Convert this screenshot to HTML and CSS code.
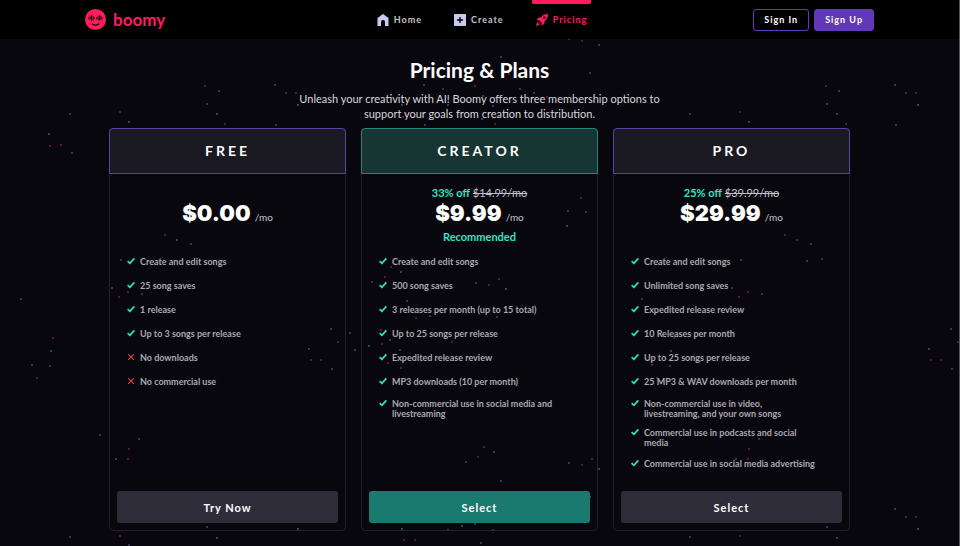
FILE: index.html
```html
<!DOCTYPE html>
<html lang="en">
<head>
<meta charset="utf-8">
<title>Boomy – Pricing &amp; Plans</title>
<link rel="stylesheet" href="styles.css">
</head>
<body>
<svg class="stars" aria-hidden="true">
  <path class="star-red" d="M205 86h0M225 124h0M286 93h0M296 93h0M120 112h0M582 41h0M509 74h0M475 86h0M403 117h0M414 117h0M495 124h0M547 97h0M826 86h0M846 124h0M906 93h0M916 93h0M740 112h0M50 146h0M61 145h0M165 235h0M581 198h0M391 267h0M785 235h0M822 259h0M119 297h0M128 292h0M53 338h0M37 378h0M338 342h0M311 360h0M321 360h0M129 449h0M128 459h0M120 536h0M385 277h0M489 285h0M499 279h0M416 318h0M381 330h0M382 344h0M452 342h0M388 363h0M401 368h0M484 447h0M478 457h0M582 465h0M592 459h0M404 540h0M415 540h0M739 297h0M748 292h0M674 338h0M657 378h0M958 342h0M931 360h0M941 360h0M749 449h0M748 459h0M906 517h0M916 517h0M740 536h0"/>
  <path class="star-teal" d="M217 114h0M298 105h0M129 122h0M534 93h0M402 105h0M482 119h0M483 96h0M827 104h0M837 114h0M918 105h0M749 122h0M49 134h0M177 240h0M567 226h0M112 288h0M51 351h0M309 349h0M116 459h0M298 529h0M217 538h0M401 272h0M506 289h0M390 340h0M369 346h0M494 452h0M599 469h0M590 497h0M402 529h0M462 526h0M671 351h0M929 349h0M736 459h0M918 529h0M837 538h0"/>
  <path class="star-blue" d="M219 91h0M207 104h0M275 85h0M276 125h0M70 114h0M569 39h0M599 45h0M501 57h0M590 73h0M424 85h0M443 89h0M520 89h0M448 105h0M493 106h0M425 125h0M839 91h0M895 85h0M896 125h0M690 114h0M72 153h0M191 244h0M121 260h0M568 211h0M586 212h0M797 240h0M811 244h0M741 260h0M807 261h0M142 294h0M21 299h0M32 365h0M50 366h0M331 329h0M350 333h0M355 350h0M332 369h0M100 435h0M139 439h0M207 527h0M70 537h0M129 545h0M372 282h0M476 283h0M407 301h0M430 316h0M497 317h0M400 350h0M466 462h0M569 463h0M501 481h0M448 530h0M475 524h0M493 530h0M481 543h0M732 288h0M762 294h0M642 299h0M652 365h0M670 366h0M951 329h0M952 369h0M759 439h0M895 509h0M827 527h0M690 537h0"/>
</svg>
<svg class="symbols" aria-hidden="true">
  <symbol id="check" viewBox="0 0 8 8"><path d="M.6 4.200 2.900 6.300 7.400 1.400" fill="none" stroke="#34e3c0" stroke-width="1.800"/></symbol>
  <symbol id="cross" viewBox="0 0 8 8"><path d="M1.200 1.200 6.800 6.800M6.800 1.200 1.200 6.800" fill="none" stroke="#dc4a3e" stroke-width="1.100"/></symbol>
</svg>
<header class="topbar">
  <a class="brand" href="#">
    <svg class="brand-mark" viewBox="0 0 20 20" aria-hidden="true">
      <circle cx="10" cy="10" r="10" fill="#ff1d5e"/>
      <path d="M3.500 7.700v2M4.900 6.600v4M6.300 5.800v5.600M7.700 6.600v4M9 7.700v2M11 7.700v2M12.400 6.600v4M13.800 5.800v5.600M15.200 6.600v4M16.500 7.700v2" stroke="#26000c" stroke-width=".9"/>
      <path d="M7 14.200q3 2.400 6 0" fill="none" stroke="#26000c" stroke-width="1.200" stroke-linecap="round"/>
    </svg>
    <span>boomy</span>
  </a>
  <nav class="nav">
    <a href="#"><svg class="nav-icon" viewBox="0 0 12 12" aria-hidden="true"><path d="M6 0 11.500 4V12H8V8a2 2 0 0 0-4 0v4H.5V4Z" fill="#c9cbee"/></svg>Home</a>
    <a href="#"><svg class="nav-icon" viewBox="0 0 12 12" aria-hidden="true"><rect width="12" height="12" rx="1" fill="#c9cbee"/><path d="M6 3v6M3 6h6" stroke="#000" stroke-width="1.400"/></svg>Create</a>
    <a class="active" href="#" aria-current="page"><svg class="nav-icon" viewBox="0 0 12 12" aria-hidden="true"><path d="M12 0C9 0 6.700 1 5 3.200L2.200 3.700.6 6.200l2.500.1L5.700 8.900l.1 2.500 2.500-1.600.5-2.800C11 5.300 12 3 12 0Z" fill="#ff1d5e"/><circle cx="8.400" cy="3.600" r="1.200" fill="#000"/><path d="M2.400 7.500Q.6 8.300 0 12q3.700-.6 4.500-2.400L3.200 9.400l-1.600 1 1-1.600Z" fill="#ff1d5e"/></svg>Pricing</a>
  </nav>
  <div class="account">
    <button type="button" class="btn-outline">Sign In</button>
    <button type="button" class="btn-solid">Sign Up</button>
  </div>
</header>
<main class="page">
  <h1>Pricing &amp; Plans</h1>
  <p class="intro">Unleash your creativity with AI! Boomy offers three membership options to support your goals from creation to distribution.</p>
  <div class="plans">
    <section class="plan">
      <h2>FREE</h2>
      <div class="pricing">
        <p class="deal"></p>
        <p class="price"><strong>$0.00</strong> <span>/mo</span></p>
        <p class="tag"></p>
      </div>
      <ul>
        <li><svg><use href="#check"/></svg><span>Create and edit songs</span></li>
        <li><svg><use href="#check"/></svg><span>25 song saves</span></li>
        <li><svg><use href="#check"/></svg><span>1 release</span></li>
        <li><svg><use href="#check"/></svg><span>Up to 3 songs per release</span></li>
        <li><svg><use href="#cross"/></svg><span>No downloads</span></li>
        <li><svg><use href="#cross"/></svg><span>No commercial use</span></li>
      </ul>
      <button type="button">Try Now</button>
    </section>
    <section class="plan featured">
      <h2>CREATOR</h2>
      <div class="pricing">
        <p class="deal"><b>33% off</b> <s>$14.99/mo</s></p>
        <p class="price"><strong>$9.99</strong> <span>/mo</span></p>
        <p class="tag">Recommended</p>
      </div>
      <ul>
        <li><svg><use href="#check"/></svg><span>Create and edit songs</span></li>
        <li><svg><use href="#check"/></svg><span>500 song saves</span></li>
        <li><svg><use href="#check"/></svg><span>3 releases per month (up to 15 total)</span></li>
        <li><svg><use href="#check"/></svg><span>Up to 25 songs per release</span></li>
        <li><svg><use href="#check"/></svg><span>Expedited release review</span></li>
        <li><svg><use href="#check"/></svg><span>MP3 downloads (10 per month)</span></li>
        <li class="tall"><svg><use href="#check"/></svg><span>Non-commercial use in social media and livestreaming</span></li>
      </ul>
      <button type="button">Select</button>
    </section>
    <section class="plan">
      <h2>PRO</h2>
      <div class="pricing">
        <p class="deal"><b>25% off</b> <s>$39.99/mo</s></p>
        <p class="price"><strong>$29.99</strong> <span>/mo</span></p>
        <p class="tag"></p>
      </div>
      <ul>
        <li><svg><use href="#check"/></svg><span>Create and edit songs</span></li>
        <li><svg><use href="#check"/></svg><span>Unlimited song saves</span></li>
        <li><svg><use href="#check"/></svg><span>Expedited release review</span></li>
        <li><svg><use href="#check"/></svg><span>10 Releases per month</span></li>
        <li><svg><use href="#check"/></svg><span>Up to 25 songs per release</span></li>
        <li><svg><use href="#check"/></svg><span>25 MP3 &amp; WAV downloads per month</span></li>
        <li class="tall"><svg><use href="#check"/></svg><span>Non-commercial use in video,<br>livestreaming, and your own songs</span></li>
        <li class="tall"><svg><use href="#check"/></svg><span>Commercial use in podcasts and social<br>media</span></li>
        <li><svg><use href="#check"/></svg><span>Commercial use in social media advertising</span></li>
      </ul>
      <button type="button">Select</button>
    </section>
  </div>
</main>
</body>
</html>
```
FILE: styles.css
```css
* { box-sizing: border-box; }

html { background: #08070e; }

body {
  margin: 0;
  min-height: 100vh;
  position: relative;
  overflow: hidden;
  border-right: 1px solid #55555a;
  color: #fff;
  font-family: Lato, "Liberation Sans", sans-serif;
}

h1, h2, p, ul { margin: 0; padding: 0; }
button { font: inherit; color: inherit; cursor: pointer; }
a { color: inherit; text-decoration: none; }

.symbols { display: none; }

.stars {
  position: absolute;
  inset: 0;
  z-index: -1;
  width: 100%;
  height: 100%;
  fill: none;
  stroke-width: 2;
  stroke-linecap: round;
}

.star-red { stroke: #7c1c3c; }
.star-teal { stroke: #286660; }
.star-blue { stroke: #44446c; }

.topbar {
  display: grid;
  grid-template-columns: 1fr auto 1fr;
  height: 39px;
  padding: 0 85px;
  background: #000;
}

.brand {
  display: flex;
  align-items: center;
  gap: 7px;
  color: #ff1d5e;
  font-size: 17px;
  font-weight: 700;
  line-height: 20px;
}

.brand-mark { width: 21px; height: 21px; }

.nav {
  display: flex;
  gap: 24px;
  padding-left: 5px;
  color: #c4c3c8;
  font-size: 9px;
  font-weight: 700;
  letter-spacing: 1px;
}

.nav a {
  position: relative;
  display: flex;
  align-items: center;
  gap: 5px;
  padding: 0 4px;
}

.nav .active { color: #ff1d5e; }

.nav .active::before {
  content: "";
  position: absolute;
  top: 0;
  left: 0;
  right: 0;
  height: 4px;
  border-radius: 0 0 2px 2px;
  background: #ff1d5e;
}

.nav-icon { width: 12px; height: 12px; }

.account {
  display: flex;
  align-items: center;
  justify-content: flex-end;
  gap: 5px;
}

.account button {
  height: 22px;
  padding: 0 10px;
  border: 1px solid #6038b8;
  border-radius: 3px;
  background: transparent;
  font-size: 9px;
  font-weight: 700;
  letter-spacing: 1px;
}

.account .btn-solid { background: #6038b8; }

.page {
  max-width: 741px;
  margin: 0 auto;
  padding: 17px 0 15px;
}

h1 {
  font-size: 21px;
  line-height: 28px;
  text-align: center;
}

.intro {
  max-width: 370px;
  margin: 7px auto;
  color: #d8d7dc;
  font-size: 11px;
  line-height: 15px;
  text-align: center;
}

.plans {
  display: grid;
  grid-template-columns: repeat(3, 1fr);
  gap: 15px;
}

.plan {
  display: flex;
  flex-direction: column;
  min-height: 403px;
  border: 1px solid #22212a;
  border-radius: 4px;
}

.plan h2 {
  height: 46px;
  margin: -1px -1px 0;
  border: 1px solid #5c42a4;
  border-radius: 4px 4px 0 0;
  background: #1b1a22;
  font-size: 14px;
  line-height: 44px;
  letter-spacing: 3px;
  text-align: center;
}

.featured h2 { border-color: #25877a; background: #173533; }

.pricing { padding-top: 12px; text-align: center; }
.deal { height: 14px; font-size: 11px; line-height: 14px; }
.deal s { color: #c4c3c8; }
.deal b, .tag { color: #34e3c0; font-weight: 700; }
.price { height: 27px; line-height: 27px; }
.price strong { font-family: Inter, Lato, sans-serif; font-size: 22px; font-weight: 900; }
.price span { color: #c4c3c8; font-size: 10px; }
.tag { height: 20px; font-size: 11px; line-height: 20px; }

.plan ul {
  flex: 1;
  padding: 3px 24px 0 17px;
  list-style: none;
  color: #aba9b0;
  font-size: 9px;
  font-weight: 700;
  line-height: 10px;
}

.plan li {
  display: flex;
  gap: 5px;
  padding: 7px 0;
}

.plan li.tall { padding: 5px 0 4px; }
.plan li svg { flex: none; width: 8px; height: 8px; }

.plan > button {
  height: 32px;
  margin: 7px;
  border: 0;
  border-radius: 3px;
  background: #302d3a;
  font-size: 11px;
  font-weight: 700;
  letter-spacing: 1px;
}

.plan.featured > button { background: #1b7a70; }
```
